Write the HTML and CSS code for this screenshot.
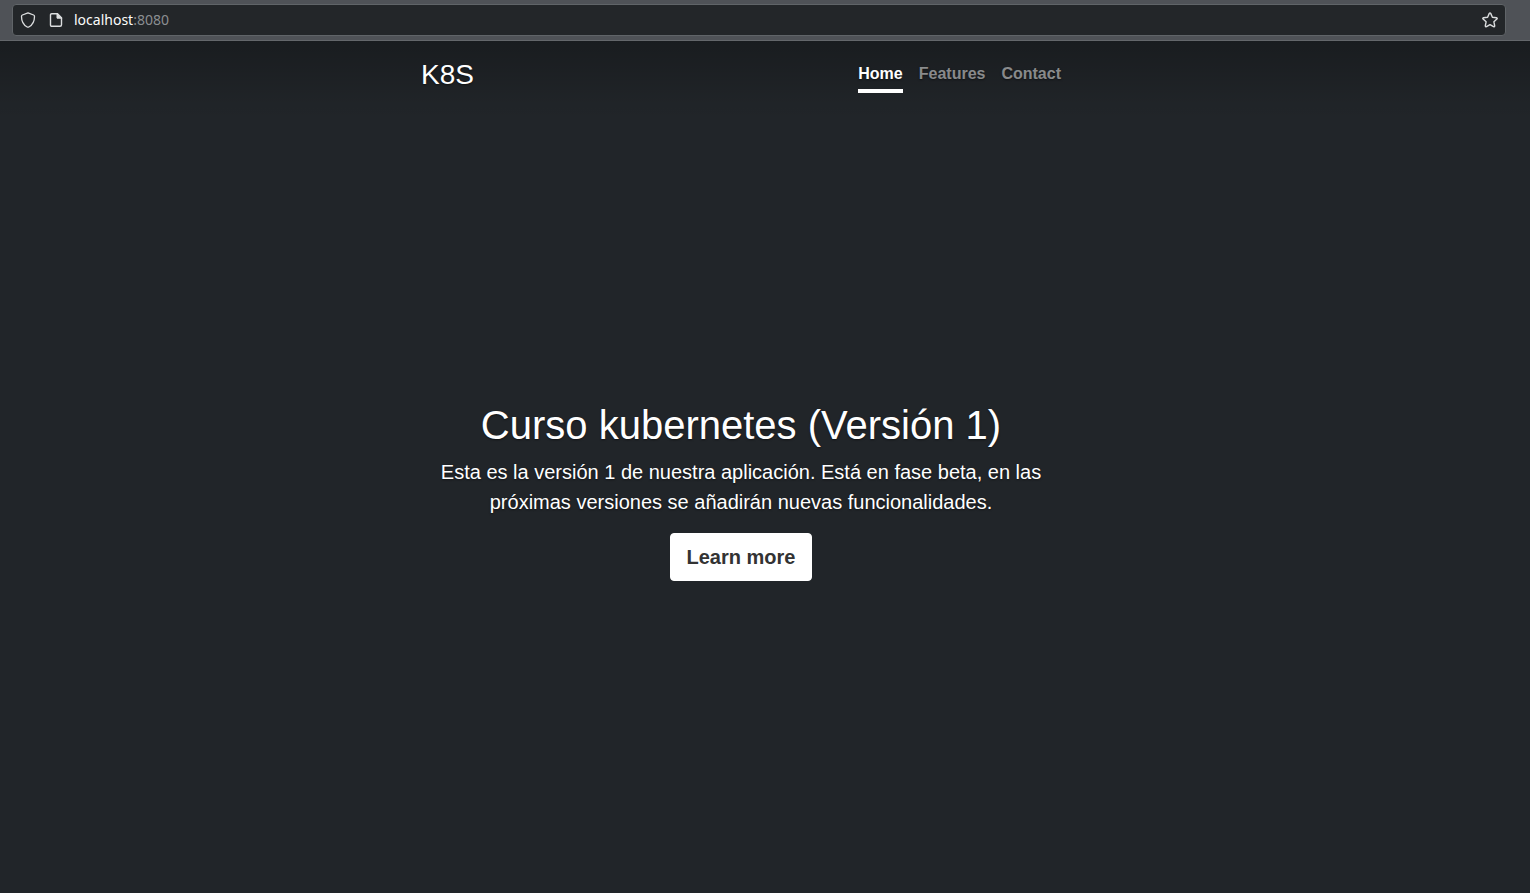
FILE: index.html
```html
<!DOCTYPE html>
<html lang="es">
<head>
  <meta charset="utf-8">
  <meta name="viewport" content="width=device-width, initial-scale=1">
  <title>K8S</title>
  <link rel="stylesheet" href="styles.css">
</head>
<body>
  <div class="toolbar">
    <div class="urlbar">
      <svg class="icon" viewBox="0 0 16 16" aria-hidden="true">
        <path d="M8 .8L13.600 3q.9.400.9 1.400c0 4.600-1.700 8.300-5.700 10.600q-.8.400-1.600 0C3.200 12.700 1.500 9 1.500 4.400q0-1 .9-1.400z" fill="none" stroke="currentColor" stroke-width="1.300" stroke-linejoin="round"/>
      </svg>
      <svg class="icon" viewBox="0 0 16 16" aria-hidden="true">
        <path d="M3.700 1.700h5.800l4 4v7.100a1.500 1.500 0 0 1-1.500 1.500H3.700a1.200 1.200 0 0 1-1.200-1.200V2.900a1.200 1.200 0 0 1 1.200-1.200z" fill="none" stroke="currentColor" stroke-width="1.400"/>
        <path d="M9 1.500v4.700h4.700z" fill="currentColor" stroke="currentColor"/>
      </svg>
      <span class="address">localhost<span class="port">:8080</span></span>
      <button class="bookmark" type="button" aria-label="Bookmark">
        <svg class="icon" viewBox="0 0 16 16" aria-hidden="true">
          <path d="M7.300 1.400q.7-1 1.400 0L10.400 5.200l4.100.5q1.100.4.4 1.300L11.900 9.800l.8 4.100q-.1 1.200-1.200.8L8 12.700l-3.500 2q-1.100.4-1.200-.8l.8-4.100L1.100 7q-.7-.9.4-1.300l4.100-.5z" fill="none" stroke="currentColor" stroke-width="1.400" stroke-linejoin="round"/>
        </svg>
      </button>
    </div>
  </div>
  <div class="page">
    <div class="cover">
      <header class="masthead">
        <h3 class="brand">K8S</h3>
        <nav class="nav">
          <a class="nav-link active" href="#" aria-current="page">Home</a>
          <a class="nav-link" href="#">Features</a>
          <a class="nav-link" href="#">Contact</a>
        </nav>
      </header>
      <main class="content">
        <h1 class="title">Curso kubernetes (Versión 1)</h1>
        <p class="lead">Esta es la versión 1 de nuestra aplicación. Está en fase beta, en las próximas versiones se añadirán nuevas funcionalidades.</p>
        <p class="action"><a class="btn" href="#">Learn more</a></p>
      </main>
    </div>
  </div>
</body>
</html>
```
FILE: styles.css
```css
*,
*::before,
*::after {
  box-sizing: border-box;
}

body {
  display: flex;
  flex-direction: column;
  min-height: 100vh;
  margin: 0;
  background: #212529;
  color: #fff;
  font-family: "Liberation Sans", Arial, sans-serif;
  font-size: 16px;
  line-height: 24px;
}

.toolbar {
  padding: 4px 24px 4px 12px;
  background: #4f5257;
  border-bottom: 1px solid #64676b;
}

.urlbar {
  display: flex;
  align-items: center;
  gap: 12px;
  height: 32px;
  padding: 0 7px;
  background: #232629;
  border: 1px solid #606468;
  border-radius: 4px;
  color: #dcdedf;
}

.icon {
  display: block;
  flex: none;
  width: 16px;
  height: 16px;
}

.address {
  flex: 1;
  margin-left: -2px;
  color: #fcfcfc;
  font-family: "Noto Sans", sans-serif;
  font-size: 14px;
  line-height: 20px;
}

.port {
  color: #8b8e91;
}

.bookmark {
  padding: 0;
  background: none;
  border: 0;
  color: inherit;
}

.page {
  display: flex;
  flex: 1;
  padding-right: 48px;
  background:
    linear-gradient(rgba(0, 0, 0, 0.24), rgba(0, 0, 0, 0.14) 30px, rgba(0, 0, 0, 0.04) 60px, transparent 80px) no-repeat;
  text-shadow: 0 1px 2px rgba(0, 0, 0, 0.5);
}

.cover {
  display: flex;
  flex-direction: column;
  width: 100%;
  max-width: 672px;
  margin: 0 auto;
  padding: 16px 16px 0;
}

.masthead {
  display: flex;
  justify-content: space-between;
  align-items: flex-start;
  margin-bottom: 12px;
}

.brand {
  margin: 0;
  font-size: 28px;
  font-weight: 400;
  line-height: 36px;
}

.nav {
  display: flex;
  gap: 16px;
}

.nav-link {
  padding: 5px 0 3px;
  border-bottom: 4px solid transparent;
  color: rgba(255, 255, 255, 0.5);
  font-weight: 700;
  text-decoration: none;
}

.nav-link.active {
  border-bottom-color: #fff;
  color: #fff;
}

.content {
  display: flex;
  flex: 1;
  flex-direction: column;
  justify-content: center;
  padding: 0 16px;
  text-align: center;
}

.title {
  margin: 0 0 8px;
  font-size: 40px;
  font-weight: 400;
  line-height: 48px;
}

.lead {
  margin: 0 0 16px;
  font-size: 20px;
  line-height: 30px;
}

.action {
  margin: 0 0 16px;
}

.btn {
  display: inline-block;
  padding: 8px 16px;
  background: #fff;
  border: 1px solid #fff;
  border-radius: 4px;
  color: #333;
  font-size: 20px;
  font-weight: 700;
  line-height: 30px;
  text-decoration: none;
  text-shadow: none;
  vertical-align: top;
}
```
